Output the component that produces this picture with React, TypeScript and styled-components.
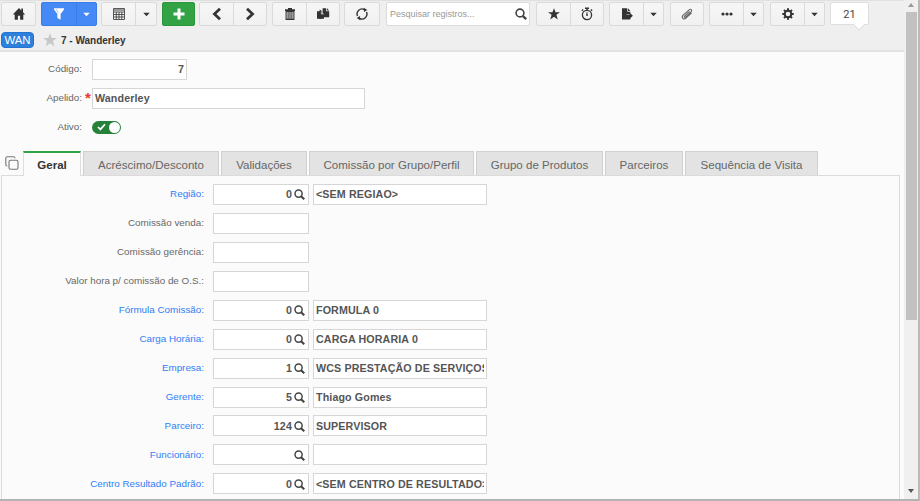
import React from 'react';
import styled, { createGlobalStyle, css } from 'styled-components';

const GlobalStyle = createGlobalStyle`
  * { box-sizing: border-box; }
  html, body { margin: 0; height: 100%; overflow: hidden; }
  body { font-family: "Liberation Sans", Arial, sans-serif; background: #fbfbfb; color: #666; }
`;

const Frame = styled.div`
  display: flex;
  width: 920px;
  height: 501px;
  border-right: 2px solid #b9b9b9;
  border-bottom: 2px solid #b3b3b3;
  background: #fbfbfb;
`;

const Page = styled.main`
  display: flex;
  flex-direction: column;
  width: 904px;
  overflow: hidden;
`;

const Header = styled.header`
  flex: none;
  height: 52px;
  background: #efefef;
  border-top: 1px solid #e0e0e0;
  border-bottom: 2px solid #e2e2e2;
`;

const Toolbar = styled.div`
  display: flex;
  height: 27px;
  padding: 1px 0 0 1px;
`;

type Tone = 'plain' | 'blue' | 'green';

const tones = {
  plain: css`background: linear-gradient(#f6f6f6, #f1f1f1); color: #333; --edge: #dadada;`,
  blue: css`background: #4589f6; color: #fff; --edge: #3a7ce6;`,
  green: css`background: #32a244; color: #fff; --edge: #2c963d;`,
};

const Group = styled.div<{ $tone: Tone; $after: number }>`
  display: flex;
  flex: none;
  height: 24px;
  margin-right: ${(p) => p.$after}px;
  border: 1px solid var(--edge);
  border-radius: 2px;
  ${(p) => tones[p.$tone]}
`;

const ToolButton = styled.button<{ $width: number }>`
  display: flex;
  align-items: center;
  justify-content: center;
  width: ${(p) => p.$width}px;
  padding: 0;
  border: 0;
  background: none;
  color: inherit;
  & + & { border-left: 1px solid var(--edge); }
  svg { display: block; }
`;

const Search = styled.label`
  display: flex;
  align-items: center;
  justify-content: space-between;
  flex: none;
  width: 144px;
  height: 24px;
  margin-right: 6px;
  padding: 0 2px 0 3px;
  border: 1px solid #dcdcdc;
  border-radius: 2px;
  background: #fff;
  color: #999;
  font-size: 9px;
`;

const Counter = styled.div`
  position: relative;
  width: 39px;
  height: 23px;
  border: 1px solid #dedede;
  border-radius: 2px;
  background: #fff;
  color: #444;
  font: 11px/23px Roboto, "Liberation Sans", sans-serif;
  text-align: center;
  &::after {
    content: '';
    position: absolute;
    left: 24px;
    top: 18px;
    width: 7px;
    height: 7px;
    background: #fff;
    border: solid #dedede;
    border-width: 0 1px 1px 0;
    transform: rotate(45deg);
  }
`;

const TitleBar = styled.div`
  display: flex;
  align-items: center;
  height: 22px;
  padding: 2px 0 0 1px;
  color: #333;
  font-size: 10px;
  font-weight: bold;
`;

const Badge = styled.span`
  width: 33px;
  height: 16px;
  margin-right: 9px;
  border: 1px solid #2374d0;
  border-radius: 4px;
  background: #2d80dc;
  color: #fff;
  font-size: 11.4px;
  font-weight: normal;
  line-height: 15px;
  text-align: center;
`;

const RecordName = styled.h1`
  margin: 0 0 0 4px;
  padding-top: 1px;
  font-size: 10px;
  line-height: 14px;
`;

const TopForm = styled.section`
  flex: none;
  height: 98px;
  padding-top: 7px;
`;

const Row = styled.div`
  display: flex;
  align-items: center;
  height: 28.95px;
  padding-bottom: 8px;
`;

const Label = styled.label<{ $width: number; $link?: boolean }>`
  flex: none;
  width: ${(p) => p.$width}px;
  color: ${(p) => (p.$link ? '#2f80f5' : '#686868')};
  font-size: 9.85px;
  line-height: 14px;
  text-align: right;
  white-space: nowrap;
`;

const Required = styled.span`
  width: 10px;
  height: 19px;
  padding-left: 3px;
  color: #e5382a;
  font-size: 15px;
  font-weight: bold;
  line-height: 17px;
`;

const Gap = styled.span`
  flex: none;
  width: 10px;
`;

const Field = styled.div<{ $width: number; $right?: boolean; $gap?: number }>`
  display: flex;
  align-items: center;
  justify-content: ${(p) => (p.$right ? 'flex-end' : 'flex-start')};
  flex: none;
  width: ${(p) => p.$width}px;
  height: 21px;
  margin-left: ${(p) => p.$gap ?? 0}px;
  padding: 1px 2px 0;
  border: 1px solid #d6d6d6;
  background: #fff;
  color: #555;
  font-size: 10.7px;
  font-weight: bold;
  letter-spacing: 0.12px;
  line-height: 17px;
  svg { flex: none; margin: 0 1px 0 2px; }
`;

const Value = styled.span`
  overflow: hidden;
  white-space: nowrap;
`;

const Switch = styled.span`
  display: flex;
  align-items: center;
  justify-content: space-between;
  width: 29px;
  height: 13px;
  padding: 0 1px 0 5px;
  border-radius: 7px;
  background: #26823a;
  &::after { content: ''; width: 11px; height: 11px; border-radius: 50%; background: #fff; }
`;

const TabBar = styled.nav`
  display: flex;
  align-items: flex-end;
  flex: none;
  height: 25px;
  padding-left: 1px;
  & > svg { flex: none; margin: 0 4px 5px 4px; }
`;

const Tab = styled.button<{ $width: number; $active?: boolean }>`
  flex: none;
  width: ${(p) => p.$width}px;
  height: 24px;
  margin-right: 2px;
  padding: 2px 0 0;
  border: 1px solid #d3d0d0;
  border-bottom: 0;
  background: #e3e3e3;
  color: #666;
  font: 11.55px/20px "Liberation Sans", Arial, sans-serif;
  white-space: nowrap;
  ${(p) =>
    p.$active &&
    css`
      position: relative;
      height: 25px;
      margin-bottom: -1px;
      padding-top: 1px;
      border-color: #dedede;
      border-top: 2px solid #2fa444;
      background: #fbfbfb;
      color: #333;
      font-weight: bold;
    `}
`;

const Panel = styled.section`
  flex: 1;
  min-height: 0;
  margin: 0 4px 0 1px;
  padding-top: 8px;
  border: solid #dcdada;
  border-width: 1px 1px 0 1px;
`;

const Scrollbar = styled.aside`
  display: flex;
  flex-direction: column;
  align-items: center;
  width: 14px;
  padding: 3px 0 6px;
  background: #f0f0f0;
`;

const Thumb = styled.div`
  width: 11px;
  height: 308px;
  margin: 5px 0 auto 1px;
  background: #c1c1c1;
`;

const Arrow = styled.i<{ $up?: boolean }>`
  border: 3px solid transparent;
  border-top-width: 0;
  border-bottom: 4px solid ${(p) => (p.$up ? '#999' : '#555')};
  transform: ${(p) => (p.$up ? 'none' : 'rotate(180deg)')};
`;

const Caret = () => (
  <svg width="7" height="5" viewBox="0 0 7 5"><path d="M.3.8h6.4L3.5 4.2z" fill="currentColor" /></svg>
);

const Magnifier = ({ size = 12 }: { size?: number }) => (
  <svg width={size} height={size} viewBox="0 0 12 12" fill="none" stroke="#444">
    <circle cx="5" cy="5" r="3.9" strokeWidth="1.6" />
    <path d="M7.7 7.9 11.2 11.2" strokeWidth="2.3" />
  </svg>
);

const Star = ({ size, color }: { size: number; color: string }) => (
  <svg width={size} height={size} viewBox="0 0 14 14">
    <path d="M7 .2 8.8 5H14L9.8 8l1.6 5.4L7 10.2l-4.4 3.2L4.2 8 0 5h5.2z" fill={color} />
  </svg>
);

const Icon = ({ children }: { children: React.ReactNode }) => (
  <svg width="14" height="14" viewBox="0 0 14 14" fill="currentColor">{children}</svg>
);

const HomeIcon = () => (
  <Icon><path d="M7 1 .8 7.4h1.9v5.3h3.2V8.8h2.2v3.9h3.2V7.4h1.9L11 5.2V1.6H9.3v1.8z" /></Icon>
);
const FilterIcon = () => (
  <Icon><path d="M2 1.2h10v1.2L8.6 7v5.8L5.4 11V7L2 2.4z" /><path d="M4.3 2.3 6.3 6" stroke="#78aafa" strokeWidth=".7" /></Icon>
);
const SheetIcon = () => (
  <Icon>
    <path d="M1.5 1.5h11v11h-11zM1.5 5h11M1.5 7.5h11M1.5 10h11M4.3 5v7.5M7 5v7.5M9.8 5v7.5" fill="none" stroke="currentColor" strokeWidth=".8" />
    <path d="M2 2h10v2H2z" fill="#999" />
  </Icon>
);
const PlusIcon = () => <Icon><path d="M5.5 1.5h3v4h4v3h-4v4h-3v-4h-4v-3h4z" /></Icon>;
const ChevronIcon = ({ next }: { next?: boolean }) => (
  <Icon><path d={next ? 'M4 1.7 9.6 7 4 12.3' : 'M10 1.7 4.4 7l5.6 5.3'} fill="none" stroke="currentColor" strokeWidth="2.7" /></Icon>
);
const TrashIcon = () => (
  <Icon>
    <path d="M5 1h4v1.3h3v1.6H2V2.3h3z" />
    <path d="M3.1 4.5h7.8v7.9H3.1zM5.1 5v7M7 5v7M8.9 5v7" fill="none" stroke="currentColor" strokeWidth="1.1" />
  </Icon>
);
const CopyIcon = () => (
  <Icon>
    <path d="M1 4.2h2.7V2.6L5.8 4v7.8H1z" />
    <path d="M6.6 1.3h3.6v3h3v6H6.6zM11 1.3l2.2 2.2H11z" />
    <path d="M5 4.2v3h3v4.6H3V4.2z" />
    <path d="M5.3 4.5v2.4h2.5" fill="none" stroke="#eee" strokeWidth=".6" />
  </Icon>
);
const RefreshIcon = () => (
  <Icon>
    <path d="M2.5 9A5 5 0 0 1 9.5 2.6M11.5 5A5 5 0 0 1 4.5 11.4" fill="none" stroke="currentColor" strokeWidth="1.4" />
    <path d="M8.7.8 12.3 3 9 5.1zM5.3 13.2 1.7 11 5 8.9z" />
  </Icon>
);
const TimerIcon = () => (
  <Icon>
    <circle cx="7" cy="8" r="4.6" fill="none" stroke="currentColor" strokeWidth="1.3" />
    <path d="M5 .6h4v1.4H7.7v1.6H6.3V2H5zM10.4 3l1-1 1.2 1.2-1 1zM3.6 3l-1-1-1.2 1.2 1 1zM6.5 5.2h1v2.1a.9.9 0 1 1-1 0z" />
  </Icon>
);
const ExportIcon = () => (
  <Icon>
    <path d="M2 1.2h5.3v3.5h3V7H6.5v3h3.8v2.6H2zM8 1.2l2.3 2.7H8z" />
    <path d="M6 7.5h3.7V5.8l3.2 3-3.2 3V10H6z" />
  </Icon>
);
const ClipIcon = () => (
  <Icon>
    <path d="m9.6 4.3-5 4.8c-.7.7.2 1.8 1 1.1l5.5-5.3c1.5-1.5-.3-3.7-2-2.1L3.2 8.2c-2.3 2.4.5 5 2.7 3l5.7-5.4" fill="none" stroke="#666" strokeWidth="1.1" />
  </Icon>
);
const DotsIcon = () => (
  <Icon><circle cx="3" cy="7" r="1.6" /><circle cx="7" cy="7" r="1.6" /><circle cx="11" cy="7" r="1.6" /></Icon>
);
const GearIcon = () => (
  <Icon>
    <circle cx="7" cy="7" r="3.3" fill="none" stroke="currentColor" strokeWidth="2" />
    <path d="M7 1.3v2M7 10.7v2M1.3 7h2M10.7 7h2M3 3l1.4 1.4M9.6 9.6 11 11M11 3 9.6 4.4M4.4 9.6 3 11" stroke="currentColor" strokeWidth="2" />
  </Icon>
);

type ToolGroup = { tone?: Tone; after: number; items: [number, React.ReactNode][] };

const leftTools: ToolGroup[] = [
  { after: 5, items: [[33, <HomeIcon />]] },
  { tone: 'blue', after: 4, items: [[34, <FilterIcon />], [20, <Caret />]] },
  { after: 5, items: [[33, <SheetIcon />], [21, <Caret />]] },
  { tone: 'green', after: 4, items: [[31, <PlusIcon />]] },
  { after: 5, items: [[33, <ChevronIcon />], [33, <ChevronIcon next />]] },
  { after: 4, items: [[33, <TrashIcon />], [33, <CopyIcon />]] },
  { after: 6, items: [[34, <RefreshIcon />]] },
];

const rightTools: ToolGroup[] = [
  { after: 5, items: [[33, <Star size={12} color="#333" />], [33, <TimerIcon />]] },
  { after: 6, items: [[33, <ExportIcon />], [20, <Caret />]] },
  { after: 5, items: [[32, <ClipIcon />]] },
  { after: 6, items: [[33, <DotsIcon />], [20, <Caret />]] },
  { after: 5, items: [[33, <GearIcon />], [20, <Caret />]] },
];

const ToolGroups = ({ groups }: { groups: ToolGroup[] }) => (
  <>
    {groups.map((g, i) => (
      <Group key={i} $tone={g.tone ?? 'plain'} $after={g.after}>
        {g.items.map(([width, icon], j) => <ToolButton key={j} $width={width}>{icon}</ToolButton>)}
      </Group>
    ))}
  </>
);

const tabs: [string, number][] = [
  ['Geral', 58], ['Acréscimo/Desconto', 136], ['Validações', 86], ['Comissão por Grupo/Perfil', 165],
  ['Grupo de Produtos', 127], ['Parceiros', 78], ['Sequência de Visita', 133],
];

type FormRow = { label: string; code?: string; text?: string };

const rows: FormRow[] = [
  { label: 'Região:', code: '0', text: '<SEM REGIAO>' },
  { label: 'Comissão venda:' },
  { label: 'Comissão gerência:' },
  { label: 'Valor hora p/ comissão de O.S.:' },
  { label: 'Fórmula Comissão:', code: '0', text: 'FORMULA 0' },
  { label: 'Carga Horária:', code: '0', text: 'CARGA HORARIA 0' },
  { label: 'Empresa:', code: '1', text: 'WCS PRESTAÇÃO DE SERVIÇOS' },
  { label: 'Gerente:', code: '5', text: 'Thiago Gomes' },
  { label: 'Parceiro:', code: '124', text: 'SUPERVISOR' },
  { label: 'Funcionário:', code: '', text: '' },
  { label: 'Centro Resultado Padrão:', code: '0', text: '<SEM CENTRO DE RESULTADO>' },
];

export default function App() {
  return (
    <>
      <GlobalStyle />
      <Frame>
        <Page>
          <Header>
            <Toolbar>
              <ToolGroups groups={leftTools} />
              <Search>Pesquisar registros...<Magnifier /></Search>
              <ToolGroups groups={rightTools} />
              <Counter>21</Counter>
            </Toolbar>
            <TitleBar>
              <Badge>WAN</Badge>
              <Star size={14} color="#c8c8c8" />
              <RecordName>7 - Wanderley</RecordName>
            </TitleBar>
          </Header>
          <TopForm>
            <Row><Label $width={82}>Código:</Label><Gap /><Field $width={95} $right>7</Field></Row>
            <Row><Label $width={82}>Apelido:</Label><Required>*</Required><Field $width={273}>Wanderley</Field></Row>
            <Row>
              <Label $width={82}>Ativo:</Label><Gap />
              <Switch>
                <svg width="9" height="8" viewBox="0 0 9 8"><path d="m1 4 2.4 2.4L8 1.3" fill="none" stroke="#fff" strokeWidth="1.7" /></svg>
              </Switch>
            </Row>
          </TopForm>
          <TabBar>
            <svg width="14" height="14" viewBox="0 0 14 14" fill="none" stroke="#777" strokeWidth="1.1">
              <rect x="4" y="4.2" width="9" height="9" rx="1.5" />
              <path d="M2.3 10C1.2 10 .8 9.5.8 8.5V2.3C.8 1.3 1.3.8 2.3.8h6.2C9.5.8 10 1.2 10 2.3" />
            </svg>
            {tabs.map(([name, width], i) => <Tab key={name} $width={width} $active={i === 0}>{name}</Tab>)}
          </TabBar>
          <Panel>
            {rows.map((r) => (
              <Row key={r.label}>
                <Label $width={202} $link={r.code !== undefined}>{r.label}</Label>
                <Field $width={96} $right $gap={9}>
                  {r.code}
                  {r.code !== undefined && <Magnifier size={11} />}
                </Field>
                {r.text !== undefined && <Field $width={174} $gap={4}><Value>{r.text}</Value></Field>}
              </Row>
            ))}
          </Panel>
        </Page>
        <Scrollbar><Arrow $up /><Thumb /><Arrow /></Scrollbar>
      </Frame>
    </>
  );
}
